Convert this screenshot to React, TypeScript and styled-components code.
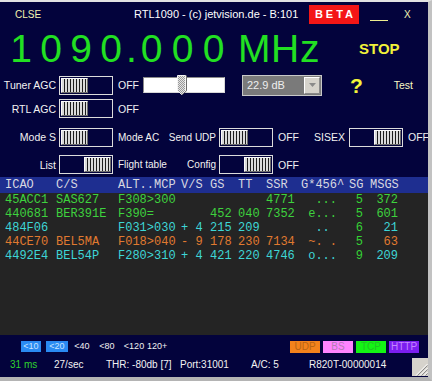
import React from 'react';
import styled, { createGlobalStyle } from 'styled-components';

const GlobalStyle = createGlobalStyle`
	html, body {
		margin: 0;
		padding: 0;
		background: #c4c4c4;
	}
	body {
		font-family: "Liberation Sans", Arial, sans-serif;
	}
`;

const Window = styled.div`
	width: 432px;
	height: 381px;
	box-sizing: border-box;
	background: #03033c;
	border-top: 2px solid #e2e2e2;
	border-right: 4px solid #c2c2c2;
	border-bottom: 4px solid #b4b4b4;
	display: flex;
	flex-direction: column;
	color: #f2f2f2;
	font-size: 11px;
	overflow: hidden;
`;

/* title bar */
const TitleBar = styled.div`
	height: 24px;
	display: flex;
	align-items: center;
	flex-shrink: 0;
`;
const Clse = styled.span`
	width: 119px;
	padding-left: 15px;
	font-size: 10px;
	color: #f4f4b0;
`;
const Title = styled.span`
	width: 175px;
	white-space: nowrap;
	color: #ffffff;
`;
const Beta = styled.span`
	width: 50px;
	height: 19px;
	box-sizing: border-box;
	padding-left: 3px;
	background: #f41616;
	color: #fff;
	font-weight: bold;
	letter-spacing: 3px;
	display: flex;
	align-items: center;
	justify-content: center;
`;
const Minimize = styled.span`
	margin-left: 11px;
	width: 18px;
	height: 14px;
	box-sizing: border-box;
	border-bottom: 1px solid #eeee90;
`;
const Close = styled.span`
	margin-left: 16px;
	font-size: 10px;
	color: #f2f2b0;
`;

/* frequency display */
const FreqRow = styled.div`
	height: 44px;
	display: flex;
	align-items: center;
	flex-shrink: 0;
`;
const Freq = styled.div`
	display: flex;
	margin-left: 6px;
	font-size: 39px;
	line-height: 39px;
	color: #22e022;
`;
const Glyph = styled.span<{ $w: number }>`
	width: ${(p) => p.$w}px;
	text-align: center;
	white-space: pre;
`;
const Stop = styled.span`
	margin-left: 43px;
	font-size: 15px;
	font-weight: bold;
	color: #f2f23a;
`;

/* control rows */
const ControlRow = styled.div<{ $h: number; $mt: number }>`
	display: flex;
	align-items: center;
	height: ${(p) => p.$h}px;
	margin-top: ${(p) => p.$mt}px;
	flex-shrink: 0;
	white-space: nowrap;
	font-size: 10.5px;

	& > * {
		flex-shrink: 0;
	}
`;
const RowLabel = styled.span`
	width: 56px;
	margin-right: 3px;
	text-align: right;
`;
const Switch = styled.div<{ $on?: boolean }>`
	width: 54px;
	height: 19px;
	box-sizing: border-box;
	border: 1px solid #dcdcdc;
	padding: 1px;
	display: flex;
	justify-content: ${(p) => (p.$on ? 'flex-end' : 'flex-start')};
`;
const Knob = styled.div`
	width: 27px;
	height: 100%;
	box-sizing: border-box;
	border: 1px solid;
	border-color: #fafafa #6c6c6c #6c6c6c #fafafa;
	background: repeating-linear-gradient(
		90deg,
		#dadada 0 2px,
		#1c1c1c 2px 3px
	);
`;
const State = styled.span<{ $w?: number }>`
	width: ${(p) => p.$w ?? 30}px;
	margin-left: 5px;
`;
const Middle = styled.div`
	width: 98px;
	padding: 0 3px 0 5px;
	display: flex;
	justify-content: space-between;
	font-size: 10px;
`;
const Caption = styled.span<{ $w: number; $ml: number }>`
	width: ${(p) => p.$w}px;
	margin-left: ${(p) => p.$ml}px;
`;

const Slider = styled.div`
	position: relative;
	width: 82px;
	height: 16px;
	box-sizing: border-box;
	background: #ffffff;
	border: 1px solid;
	border-color: #8a8a8a #d8d8d8 #d8d8d8 #8a8a8a;
`;
const SliderThumb = styled.svg`
	position: absolute;
	left: 33px;
	top: -3px;
`;

const Select = styled.div`
	margin-left: 17px;
	width: 80px;
	height: 21px;
	box-sizing: border-box;
	border: 1px solid #c8c8c8;
	padding: 1px;
	background: #7a7a7a;
	display: flex;
	align-items: center;
	font-size: 11px;
`;
const SelectText = styled.span`
	flex: 1;
	padding-left: 3px;
	color: #eeeeee;
`;
const SelectButton = styled.span`
	width: 16px;
	height: 100%;
	box-sizing: border-box;
	background: #d6d3cc;
	border: 1px solid;
	border-color: #ffffff #8a8a8a #8a8a8a #ffffff;
	display: flex;
	align-items: center;
	justify-content: center;
`;
const Help = styled.span`
	margin-left: 28px;
	font-size: 21px;
	font-weight: bold;
	line-height: 1;
	color: #f4f43a;
`;
const Test = styled.span`
	margin-left: auto;
	margin-right: 15px;
	font-size: 10.5px;
	color: #f8f8c4;
`;

/* aircraft table */
const Table = styled.div`
	margin-top: 3px;
	display: flex;
	flex-direction: column;
	font-family: "Liberation Mono", "Courier New", monospace;
	font-size: 12px;
	flex-shrink: 0;
`;
const Row = styled.div<{ $color?: string }>`
	display: grid;
	grid-template-columns: 51px 62px 63px 29px 28px 28px 35px 48px 21px 28px;
	padding-left: 5px;
	height: 14px;
	line-height: 14px;
	white-space: pre;
	color: ${(p) => p.$color ?? '#d8d8e0'};
`;
const HeadRow = styled(Row)`
	height: 16px;
	line-height: 16px;
	background: #1e2e90;
`;
const Body = styled.div`
	height: 142px;
	background: #242424;
`;
const SgCell = styled.span<{ $head?: boolean }>`
	text-align: right;
	padding-right: 7px;
	color: ${(p) => (p.$head ? 'inherit' : '#34d234')};
`;
const NumCell = styled.span`
	text-align: right;
`;

/* footer */
const Footer = styled.div`
	height: 42px;
	display: flex;
	flex-direction: column;
	flex-shrink: 0;
`;
const BadgeRow = styled.div`
	margin-top: 6px;
	height: 11px;
	display: flex;
	align-items: center;
	font-size: 9px;
`;
const Spacer = styled.span<{ $w?: number }>`
	width: ${(p) => (p.$w === undefined ? 'auto' : `${p.$w}px`)};
	flex: ${(p) => (p.$w === undefined ? 1 : 'none')};
`;
const Range = styled.span<{ $w: number; $on?: boolean }>`
	width: ${(p) => p.$w}px;
	height: 11px;
	line-height: 11px;
	text-align: center;
	color: ${(p) => (p.$on ? '#c8e4ff' : '#f0f0f0')};
	background: ${(p) => (p.$on ? '#2a8af2' : 'transparent')};
`;
const Proto = styled.span<{ $bg: string; $fg: string }>`
	width: 30px;
	height: 12px;
	line-height: 12px;
	margin-left: 3px;
	text-align: center;
	font-size: 10px;
	background: ${(p) => p.$bg};
	color: ${(p) => p.$fg};
`;
const StatusRow = styled.div`
	margin-top: 2px;
	height: 23px;
	box-sizing: border-box;
	padding: 0 0 3px 10px;
	display: flex;
	align-items: center;
	font-size: 10px;
	white-space: nowrap;
`;
const Stat = styled.span<{ $w: number; $color?: string }>`
	width: ${(p) => p.$w}px;
	color: ${(p) => p.$color ?? '#f2f2f2'};
`;
const Grip = styled.svg`
	align-self: flex-end;
	margin-bottom: -2px;
`;

type Flight = {
	icao: string;
	cs: string;
	alt: string;
	vs: string;
	gs: string;
	tt: string;
	ssr: string;
	g: string;
	sg: string;
	msgs: string;
	color: string;
};

const GREEN = '#3ed23e';
const CYAN = '#3ed6d6';
const ORANGE = '#e07a30';

const flights: Flight[] = [
	{ icao: '45ACC1', cs: 'SAS627', alt: 'F308>300', vs: '', gs: '', tt: '', ssr: '4771', g: '  ...', sg: '5', msgs: '372', color: GREEN },
	{ icao: '440681', cs: 'BER391E', alt: 'F390=', vs: '', gs: '452', tt: '040', ssr: '7352', g: ' e...', sg: '5', msgs: '601', color: GREEN },
	{ icao: '484F06', cs: '', alt: 'F031>030', vs: '+ 4', gs: '215', tt: '209', ssr: '', g: '  ..', sg: '6', msgs: '21', color: CYAN },
	{ icao: '44CE70', cs: 'BEL5MA', alt: 'F018>040', vs: '- 9', gs: '178', tt: '230', ssr: '7134', g: ' ~. .', sg: '5', msgs: '63', color: ORANGE },
	{ icao: '4492E4', cs: 'BEL54P', alt: 'F280>310', vs: '+ 4', gs: '421', tt: '220', ssr: '4746', g: ' o...', sg: '9', msgs: '209', color: CYAN },
];

const freqGlyphs: [string, number][] = [
	['1', 30], ['0', 30], ['9', 30], ['0', 30], ['.', 10], ['0', 31], ['0', 31], ['0', 31],
	[' ', 9], ['M', 32], ['H', 30], ['z', 16],
];

const ranges: { text: string; w: number; gap: number; on?: boolean }[] = [
	{ text: '<10', w: 20, gap: 5, on: true },
	{ text: '<20', w: 22, gap: 4, on: true },
	{ text: '<40', w: 20, gap: 5 },
	{ text: '<80', w: 20, gap: 4 },
	{ text: '<120', w: 26, gap: 0 },
	{ text: '120+', w: 20, gap: 0 },
];

const Toggle: React.FC<{ on?: boolean }> = ({ on }) => (
	<Switch $on={on}>
		<Knob />
	</Switch>
);

const App: React.FC = () => {
	return (
		<>
			<GlobalStyle />
			<Window>
				<TitleBar>
					<Clse>CLSE</Clse>
					<Title>RTL1090 - (c) jetvision.de - B:101</Title>
					<Beta>BETA</Beta>
					<Minimize />
					<Close>X</Close>
				</TitleBar>

				<FreqRow>
					<Freq>
						{freqGlyphs.map(([ch, w], i) => (
							<Glyph key={i} $w={w}>
								{ch}
							</Glyph>
						))}
					</Freq>
					<Stop>STOP</Stop>
				</FreqRow>

				<ControlRow $h={20} $mt={5}>
					<RowLabel>Tuner AGC</RowLabel>
					<Toggle />
					<State $w={25}>OFF</State>
					<Slider>
						<SliderThumb width="10" height="20" viewBox="0 0 10 20">
							<defs>
								<pattern id="dots" width="2" height="2" patternUnits="userSpaceOnUse">
									<rect width="2" height="2" fill="#e4e4e4" />
									<rect width="1" height="1" fill="#9a9a9a" />
									<rect x="1" y="1" width="1" height="1" fill="#9a9a9a" />
								</pattern>
							</defs>
							<polygon points="0.5,0.5 8.5,0.5 8.5,15.5 4.5,19.5 0.5,15.5" fill="url(#dots)" stroke="#f4f4f4" />
							<polyline points="9.5,0.5 9.5,15.8 5,19.8" fill="none" stroke="#6c6c6c" />
						</SliderThumb>
					</Slider>
					<Select>
						<SelectText>22.9 dB</SelectText>
						<SelectButton>
							<svg width="7" height="4" viewBox="0 0 7 4">
								<polygon points="0,0 7,0 3.5,4" fill="#8a8a8a" />
							</svg>
						</SelectButton>
					</Select>
					<Help>?</Help>
					<Test>Test</Test>
				</ControlRow>

				<ControlRow $h={19} $mt={4}>
					<RowLabel>RTL AGC</RowLabel>
					<Toggle />
					<State>OFF</State>
				</ControlRow>

				<ControlRow $h={20} $mt={9}>
					<RowLabel>Mode S</RowLabel>
					<Toggle />
					<Middle>
						<span>Mode AC</span>
						<span>Send UDP</span>
					</Middle>
					<Toggle />
					<State>OFF</State>
					<Caption $w={35} $ml={6}>SISEX</Caption>
					<Toggle on />
					<State $w={20}>OFF</State>
				</ControlRow>

				<ControlRow $h={19} $mt={8}>
					<RowLabel>List</RowLabel>
					<Toggle on />
					<Middle>
						<span>Flight table</span>
						<span>Config</span>
					</Middle>
					<Toggle on />
					<State>OFF</State>
				</ControlRow>

				<Table>
					<HeadRow>
						<span>ICAO</span>
						<span>C/S</span>
						<span>ALT..MCP</span>
						<span>V/S</span>
						<span>GS</span>
						<span>TT</span>
						<span>SSR</span>
						<span>G*456^</span>
						<SgCell $head>SG</SgCell>
						<NumCell>MSGS</NumCell>
					</HeadRow>
					<Body>
						{flights.map((f) => (
							<Row key={f.icao} $color={f.color}>
								<span>{f.icao}</span>
								<span>{f.cs}</span>
								<span>{f.alt}</span>
								<span>{f.vs}</span>
								<span>{f.gs}</span>
								<span>{f.tt}</span>
								<span>{f.ssr}</span>
								<span>{f.g}</span>
								<SgCell>{f.sg}</SgCell>
								<NumCell>{f.msgs}</NumCell>
							</Row>
						))}
					</Body>
				</Table>

				<Footer>
					<BadgeRow>
						<Spacer $w={21} />
						{ranges.map((r) => (
							<React.Fragment key={r.text}>
								<Range $w={r.w} $on={r.on}>
									{r.text}
								</Range>
								{r.gap > 0 && <Spacer $w={r.gap} />}
							</React.Fragment>
						))}
						<Spacer />
						<Proto $bg="#f4821c" $fg="#b86414">UDP</Proto>
						<Proto $bg="#ff84ff" $fg="#b47cb4">BS</Proto>
						<Proto $bg="#14f414" $fg="#22c222">TCP</Proto>
						<Proto $bg="#7c1ef0" $fg="#c484ff">HTTP</Proto>
						<Spacer $w={9} />
					</BadgeRow>
					<StatusRow>
						<Stat $w={44} $color="#2ed22e">31 ms</Stat>
						<Stat $w={52}>27/sec</Stat>
						<Stat $w={74}>THR: -80db [7]</Stat>
						<Stat $w={71}>Port:31001</Stat>
						<Stat $w={58}>A/C: 5</Stat>
						<Stat $w={103}>R820T-00000014</Stat>
						<Grip width="16" height="18" viewBox="0 0 16 18">
							<rect width="16" height="18" fill="#d6d3cc" />
							<g strokeWidth="1">
								<line x1="15.5" y1="6" x2="4" y2="17.5" stroke="#ffffff" />
								<line x1="15.5" y1="7.5" x2="5.5" y2="17.5" stroke="#8a8a8a" />
								<line x1="15.5" y1="10" x2="8" y2="17.5" stroke="#ffffff" />
								<line x1="15.5" y1="11.5" x2="9.5" y2="17.5" stroke="#8a8a8a" />
								<line x1="15.5" y1="14" x2="12" y2="17.5" stroke="#ffffff" />
								<line x1="15.5" y1="15.5" x2="13.5" y2="17.5" stroke="#8a8a8a" />
							</g>
						</Grip>
					</StatusRow>
				</Footer>
			</Window>
		</>
	);
};

export default App;
